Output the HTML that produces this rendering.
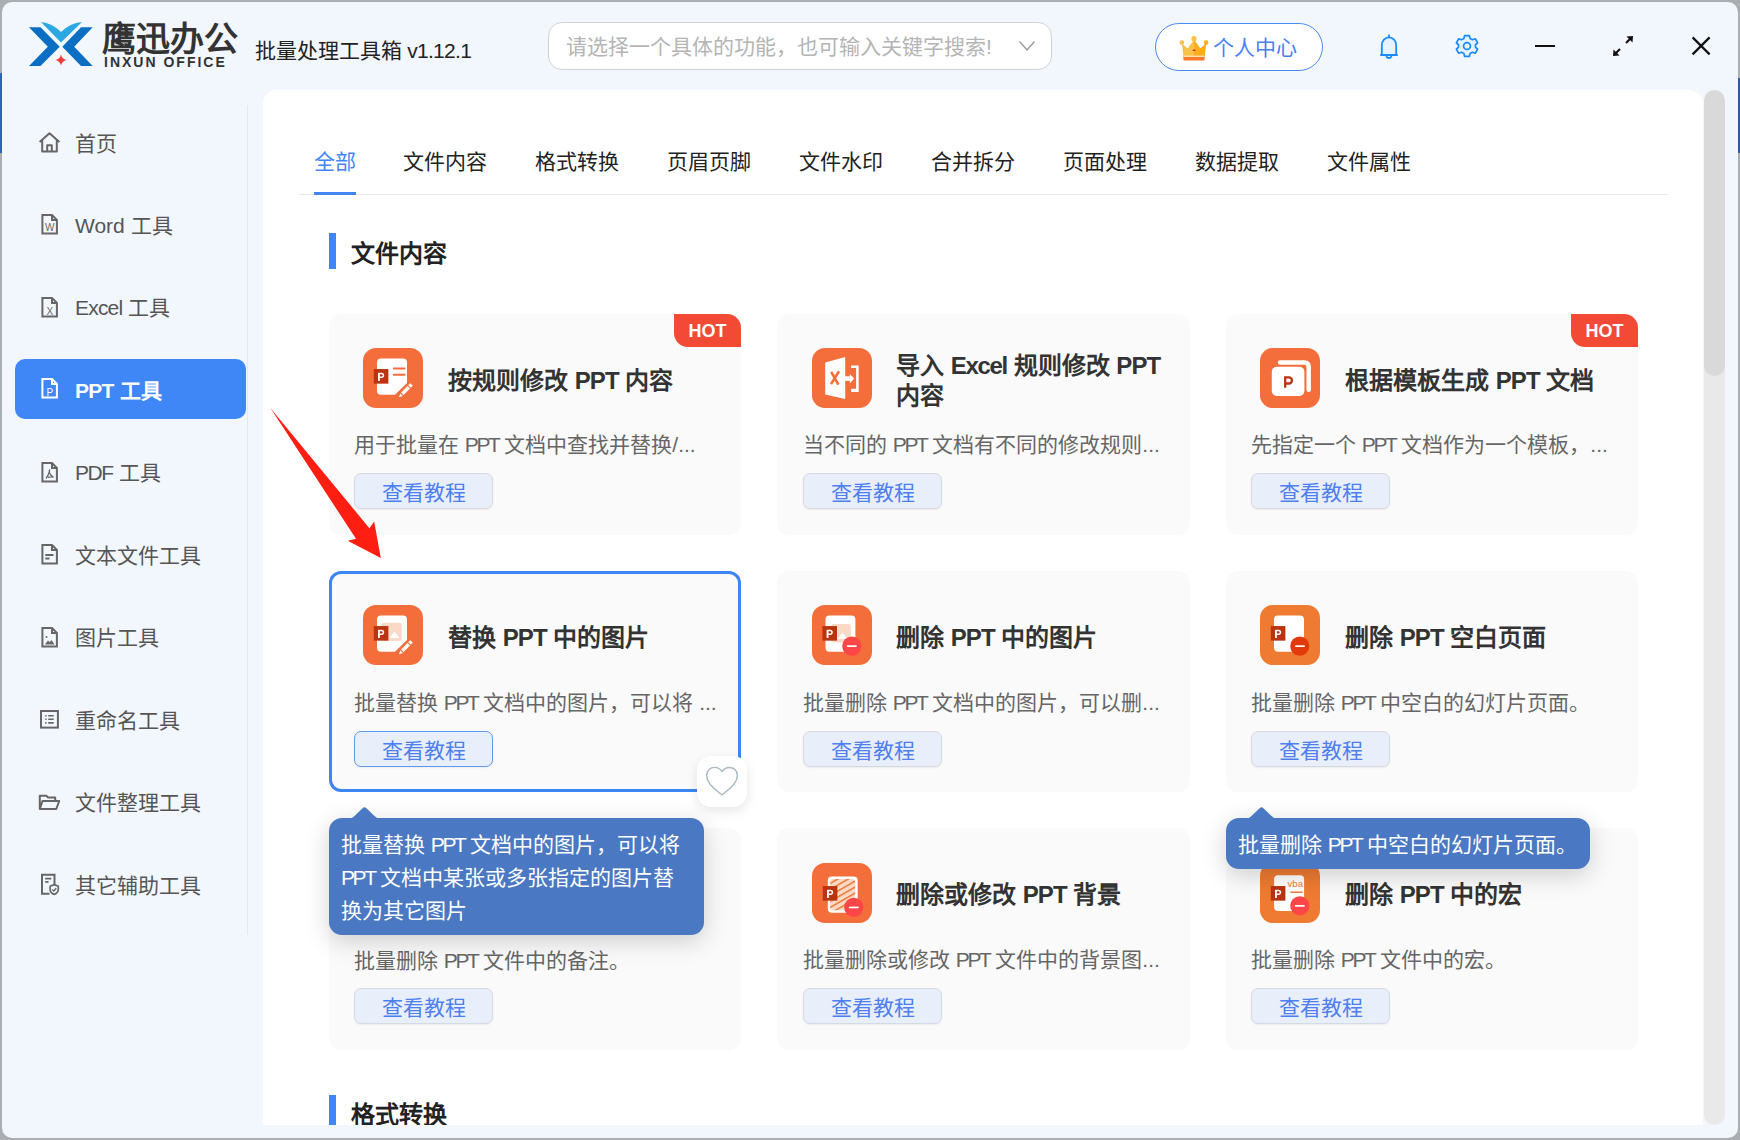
<!DOCTYPE html>
<html lang="zh-CN"><head><meta charset="utf-8">
<style>
*{box-sizing:border-box;margin:0;padding:0}
html,body{width:1740px;height:1140px;overflow:hidden}
body{position:relative;background:#aaadb2;font-family:"Liberation Sans",sans-serif;color:#222}
.a{position:absolute}
.t{position:absolute;white-space:nowrap;line-height:1}
#win{position:absolute;left:2px;top:2px;width:1736px;height:1136px;border-radius:10px;background:#f2f6fd}
.side{position:absolute;left:75px;font-size:21px;color:#555;line-height:1}
.sico{position:absolute;left:39px}
#panel{position:absolute;left:263px;top:90px;width:1440px;height:1035px;background:#fff;border-radius:14px 14px 0 0;overflow:hidden}
.tab{position:absolute;top:151.3px;font-size:21px;line-height:1;color:#222}
.card{position:absolute;width:412px;height:221px;background:#fafafa;border-radius:12px}
.card .ico{position:absolute;left:34px;top:34px;width:60px;height:60px}
.card .tt{position:absolute;left:119px;top:55px;font-size:24px;font-weight:bold;color:#333;line-height:1;white-space:nowrap}
.card .ds{position:absolute;left:25px;top:120px;font-size:21px;color:#666;line-height:1;white-space:nowrap}
.card .bt{position:absolute;left:25px;top:159px;width:139px;height:36px;border:1px solid #d6dae3;background:#e9eefb;border-radius:7px;box-shadow:0 1px 2px rgba(0,0,0,.06)}
.card .bt span{position:absolute;left:27px;top:8px;font-size:21px;line-height:1;color:#4d7ff2;white-space:nowrap}
.l{letter-spacing:-2.4px}.lb{letter-spacing:-0.85px}
.hot{position:absolute;right:0;top:0;width:67px;height:33px;background:#f34a36;border-radius:0 14px 0 14px;color:#fff;font-weight:bold;font-size:18px;line-height:35px;text-align:center}
</style></head><body>
<div class="a" style="left:0;top:73px;width:2px;height:80px;background:#2f62b8"></div><div class="a" style="left:1738px;top:78px;width:2px;height:75px;background:#2f5a9c"></div>
<div id="win"></div>
<svg width="0" height="0" style="position:absolute">
<defs>
 <g id="pbox"><rect x="10.8" y="21.05" width="14.6" height="14.6" fill="#b9340f"/><rect x="15" y="24.8" width="1.9" height="8.1" fill="#fff"/><path d="M16.5,25.55 H18.57 A1.875,1.875 0 0 1 18.57,29.3 H16.5" fill="none" stroke="#fff" stroke-width="1.5"/></g>
 <g id="pbox2"><use href="#pbox" y="2"/></g>
 <g id="minus"><rect x="34.9" y="40.3" width="9.8" height="1.7" fill="#fff"/></g>
 <g id="i1">
  <rect width="60" height="60" rx="13" fill="#f36e3b"/>
  <path d="M18,10.5 H40 Q44,10.5 44,14.5 V35 L32,46.7 H18 Q14,46.7 14,42.7 V14.5 Q14,10.5 18,10.5Z" fill="#fff"/>
  <path d="M30.8,20.5 H41.6 M30.8,26.8 H41.6" stroke="#f36e3b" stroke-width="2" stroke-linecap="round"/>
  <use href="#pbox"/>
  <path d="M39.35,45.85 L45.75,39.35" stroke="#fff" stroke-width="3.5"/>
  <path d="M46.5,38.6 L48.6,36.5" stroke="#fff" stroke-width="3.5"/>
  <polygon points="37.4,45.4 39.9,47.9 35.9,49.3" fill="#fff"/>
 </g>
 <g id="i4">
  <rect width="60" height="60" rx="13" fill="#f36e3b"/>
  <path d="M18,10.5 H40 Q44,10.5 44,14.5 V35 L32,46.7 H18 Q14,46.7 14,42.7 V14.5 Q14,10.5 18,10.5Z" fill="#fff"/>
  <rect x="18.4" y="17.8" width="20.4" height="18.1" rx="2" fill="#fad9c6"/>
  <polygon points="26.5,33 31.5,26.3 36.4,33" fill="#fff"/>
  <use href="#pbox"/>
  <path d="M39.35,45.85 L45.75,39.35" stroke="#fff" stroke-width="3.5"/>
  <path d="M46.5,38.6 L48.6,36.5" stroke="#fff" stroke-width="3.5"/>
  <polygon points="37.4,45.4 39.9,47.9 35.9,49.3" fill="#fff"/>
 </g>
 <g id="i2">
  <rect width="60" height="60" rx="13" fill="#f36e3b"/>
  <polygon points="13.2,14.5 33.2,8.9 33.2,51 13.2,46.4" fill="#fff"/>
  <path d="M19.2,23.8 L26.4,36.6 M27,23.2 L19,36.1" stroke="#f36e3b" stroke-width="2.6"/>
  <rect x="33" y="28.3" width="4.9" height="4.6" fill="#fff"/>
  <polygon points="37.8,26 42.1,30.6 37.8,35.4" fill="#fff"/>
  <path d="M39.1,17.4 H46.7 V44.1 H39.1 V40.8 H44.1 V20.1 H39.1Z" fill="#fff"/>
 </g>
 <g id="i3">
  <rect width="60" height="60" rx="13" fill="#f36e3b"/>
  <path d="M20,14.5 H44.2 Q48.7,14.5 48.7,19 V41.8" fill="none" stroke="#fff" stroke-width="4.5" stroke-linecap="round"/>
  <rect x="11.8" y="18.8" width="32.6" height="29.2" rx="5" fill="#fff"/>
  <path d="M25.2,39.8 V29.4 H28.9 A3.05,3.05 0 0 1 28.9,35.5 H25.2" fill="none" stroke="#b9340f" stroke-width="2.3"/>
 </g>
 <g id="i5">
  <rect width="60" height="60" rx="13" fill="#f36e3b"/>
  <rect x="13.5" y="10.5" width="29.9" height="36.2" rx="4" fill="#fff"/>
  <rect x="19.4" y="19" width="19.4" height="18.5" rx="2" fill="#fad9c6"/>
  <polygon points="25.5,34 30.5,27.5 35.5,34" fill="#fff"/>
  <use href="#pbox" x="-0.4"/>
  <circle cx="39.8" cy="41.1" r="9.6" fill="#ff4646"/>
  <rect x="34.9" y="40.3" width="9.8" height="1.7" fill="#fff"/>
 </g>
 <g id="i6">
  <rect width="60" height="60" rx="13" fill="#ee7b31"/>
  <rect x="14" y="10.5" width="30" height="36.2" rx="4" fill="#fff"/>
  <use href="#pbox"/>
  <circle cx="39.8" cy="41.1" r="9.6" fill="#e23a0b"/>
  <rect x="35.2" y="40.3" width="9.6" height="1.7" fill="#fff"/>
 </g>
 <pattern id="hatch" patternUnits="userSpaceOnUse" width="5.2" height="5.2" patternTransform="rotate(-30)">
  <rect width="5.2" height="5.2" fill="#fad9c6"/><rect y="0" width="5.2" height="1.5" fill="#f3782f"/>
 </pattern>
 <g id="i8">
  <rect width="60" height="60" rx="13" fill="#f36e3b"/>
  <rect x="15.8" y="13.5" width="29.9" height="36.2" rx="4" fill="#fff"/>
  <rect x="18.2" y="16" width="25" height="31.3" rx="3" fill="url(#hatch)"/>
  <use href="#pbox2"/>
  <circle cx="41.8" cy="44.4" r="9.6" fill="#ff4646"/>
  <rect x="36.9" y="43.6" width="9.8" height="1.7" fill="#fff"/>
 </g>
 <g id="i9">
  <rect width="60" height="60" rx="13" fill="#ee7b31"/>
  <rect x="14.1" y="12.2" width="30" height="35.8" rx="4" fill="#fff"/>
  <text x="27.6" y="23.7" font-family="Liberation Sans" font-size="9.2" fill="#ee7b31" textLength="15.4" lengthAdjust="spacingAndGlyphs">vba</text>
  <path d="M31,29.3 H42" stroke="#ee7b31" stroke-width="1.5" stroke-linecap="round"/>
  <use href="#pbox2"/>
  <circle cx="39.8" cy="42.8" r="9.6" fill="#ff4646"/>
  <rect x="34.9" y="42" width="9.8" height="1.7" fill="#fff"/>
 </g>
</defs></svg>


<!-- logo -->
<svg class="a" style="left:0;top:0" width="250" height="80" viewBox="0 0 250 80">
  <polygon fill="#0a6fc2" points="29,27.2 40.5,27.2 59.7,46.7 40.5,65.9 29,65.9 47.8,46.7"/>
  <polygon fill="#0a6fc2" points="92.7,27.2 81,27.2 62.3,46.7 81,65.9 92.7,65.9 74.2,46.7"/>
  <path fill="#2aa8e2" d="M41,22 Q52,23 61,32 Q70,23 82,22 L61,42.5 Z"/>
  <path fill="#f23a3a" d="M61,54.5 Q62,59 66.5,60 Q62,61 61,65.5 Q60,61 55.5,60 Q60,59 61,54.5Z"/>
</svg>
<div class="t" style="left:102px;top:21.5px;font-size:34px;font-weight:600;color:#333">鹰迅办公</div>
<div class="t" style="left:104px;top:55px;font-size:14px;font-weight:bold;color:#333;letter-spacing:2px">INXUN OFFICE</div>
<div class="t" style="left:255px;top:39.5px;font-size:21px;color:#222">批量处理工具箱<span style="letter-spacing:-0.7px"> v1.12.1</span></div>

<!-- search -->
<div class="a" style="left:548px;top:22px;width:504px;height:48px;border:1px solid #d3d3d3;background:#fff;border-radius:14px"></div>
<div class="t" style="left:566px;top:36px;font-size:21px;color:#b5b5b5">请选择一个具体的功能，也可输入关键字搜索!</div>
<svg class="a" style="left:1017px;top:39px" width="20" height="14"><polyline points="2.5,2.5 10,11 17.5,2.5" fill="none" stroke="#9a9a9a" stroke-width="1.4"/></svg>

<!-- user center -->
<div class="a" style="left:1155px;top:23px;width:168px;height:48px;border:1.5px solid #4a8af4;background:#fff;border-radius:24px"></div>
<svg class="a" style="left:1179px;top:35px" width="30" height="28" viewBox="0 0 30 28">
  <path d="M3,8.5 L8.7,13.4 L15,4.8 L21.3,13.4 L27,8.5 L25.6,22 L4.4,22Z" fill="#f8c14a"/>
  <path d="M15,4.8 L21.3,13.4 L27,8.5 L25.6,22 L15,22Z" fill="#ffad18"/>
  <circle cx="2.9" cy="7.6" r="2.3" fill="#f8c14a"/><circle cx="27.1" cy="7.6" r="2.3" fill="#ffad18"/><circle cx="15" cy="3.7" r="2.6" fill="#f8c14a"/>
  <path d="M4.4,21 H25.6 V24.3 Q25.6,25.5 24.4,25.5 H5.6 Q4.4,25.5 4.4,24.3Z" fill="#f57a2e"/>
  <rect x="4.4" y="20.6" width="21.2" height="1.4" fill="#ffe0a6"/>
  <rect x="13.9" y="14.6" width="2.4" height="1.4" fill="#d0202a"/>
</svg>
<div class="t" style="left:1213px;top:37px;font-size:21px;color:#4a7ff5">个人中心</div>

<!-- bell / gear -->
<svg class="a" style="left:1376px;top:32px" width="26" height="28" viewBox="0 0 26 28">
  <path d="M5.8,23 L5.8,13.5 A7.2,8.2 0 0 1 20.2,13.5 L20.2,23 Z" fill="#e6f3ff" stroke="#1a8cff" stroke-width="1.8"/>
  <line x1="4.2" y1="23" x2="21.8" y2="23" stroke="#1a8cff" stroke-width="1.8"/>
  <path d="M10.5,23.5 A2.5,2.5 0 0 0 15.5,23.5" fill="none" stroke="#1a8cff" stroke-width="1.8"/>
  <line x1="13" y1="2.5" x2="13" y2="5" stroke="#1a8cff" stroke-width="1.8"/>
</svg>
<svg class="a" style="left:1453px;top:32px" width="28" height="28" viewBox="-14.7 -14.7 29.4 29.4">
  <path id="gear" fill="#e6f3ff" stroke="#1a8cff" stroke-width="1.8" stroke-linejoin="round" d="M-2.5,-11 L2.5,-11 L3.2,-8 L5.8,-6.6 L8.7,-7.6 L11.2,-3.3 L8.9,-1.3 L8.9,1.3 L11.2,3.3 L8.7,7.6 L5.8,6.6 L3.2,8 L2.5,11 L-2.5,11 L-3.2,8 L-5.8,6.6 L-8.7,7.6 L-11.2,3.3 L-8.9,1.3 L-8.9,-1.3 L-11.2,-3.3 L-8.7,-7.6 L-5.8,-6.6 L-3.2,-8 Z"/>
  <circle cx="0" cy="0" r="3.6" fill="none" stroke="#1a8cff" stroke-width="1.8"/>
</svg>

<!-- window controls -->
<div class="a" style="left:1535px;top:45px;width:20px;height:2.2px;background:#111"></div>
<svg class="a" style="left:1610px;top:33px" width="26" height="26" viewBox="0 0 26 26">
  <line x1="5" y1="21" x2="10" y2="16" stroke="#111" stroke-width="2.2"/>
  <line x1="16" y1="10" x2="21" y2="5" stroke="#111" stroke-width="2.2"/>
  <polygon points="3,23 3.5,16.5 9.5,22.5" fill="#111"/>
  <polygon points="23,3 22.5,9.5 16.5,3.5" fill="#111"/>
</svg>
<svg class="a" style="left:1689px;top:34px" width="24" height="24" viewBox="0 0 24 24">
  <line x1="3.6" y1="3.4" x2="20.6" y2="20.4" stroke="#111" stroke-width="2.2"/>
  <line x1="20.6" y1="3.4" x2="3.6" y2="20.4" stroke="#111" stroke-width="2.2"/>
</svg>

<!-- SIDEBAR -->
<div class="a" style="left:247px;top:105px;width:1px;height:830px;background:#e6e8ee"></div>
<div class="a" style="left:15px;top:359px;width:231px;height:60px;background:#3f86f7;border-radius:10px"></div>

<svg class="a" style="left:37px;top:130px" width="26" height="26" viewBox="0 0 26 26"><path d="M2.6,12 L12.5,3.2 L22.4,12 M5.2,10 V21.6 H19.8 V10 M10.2,21.6 V15.3 H14.8 V21.6" fill="none" stroke="#666" stroke-width="2" stroke-linejoin="round"/></svg><svg class="a" style="left:38px;top:212px" width="24" height="26" viewBox="0 0 24 26"><path d="M4.4,3 H14 L18.9,7.9 V21.6 H4.4 Z M14,3 V7.9 H18.9" fill="none" stroke="#666" stroke-width="2" stroke-linejoin="miter"/><text x="11.8" y="19.2" font-family="Liberation Sans" font-size="10" fill="#666" text-anchor="middle">W</text></svg><svg class="a" style="left:38px;top:295px" width="24" height="26" viewBox="0 0 24 26"><path d="M4.4,3 H14 L18.9,7.9 V21.6 H4.4 Z M14,3 V7.9 H18.9" fill="none" stroke="#666" stroke-width="2" stroke-linejoin="miter"/><text x="11.8" y="19.6" font-family="Liberation Sans" font-size="10" fill="#666" text-anchor="middle">X</text></svg><svg class="a" style="left:38px;top:376px" width="24" height="26" viewBox="0 0 24 26"><path d="M4.4,3 H14 L18.9,7.9 V21.6 H4.4 Z M14,3 V7.9 H18.9" fill="none" stroke="#fff" stroke-width="2" stroke-linejoin="miter"/><text x="11.8" y="19.8" font-family="Liberation Sans" font-size="10" fill="#fff" text-anchor="middle">P</text></svg><svg class="a" style="left:38px;top:460px" width="24" height="26" viewBox="0 0 24 26"><path d="M4.4,3 H14 L18.9,7.9 V21.6 H4.4 Z M14,3 V7.9 H18.9" fill="none" stroke="#666" stroke-width="2" stroke-linejoin="miter"/><path d="M8,18.5 Q10,16 11.3,12 Q12,10 11.5,9.8 Q10.8,10.2 11.6,13 Q12.6,15.8 15.5,17 Q13,16.5 10,17.3" fill="none" stroke="#666" stroke-width="1.3"/></svg><svg class="a" style="left:38px;top:542px" width="24" height="26" viewBox="0 0 24 26"><path d="M4.4,3 H14 L18.9,7.9 V21.6 H4.4 Z M14,3 V7.9 H18.9" fill="none" stroke="#666" stroke-width="2" stroke-linejoin="miter"/><path d="M7.3,13 H15.5 M7.3,16.5 H11.5" stroke="#666" stroke-width="1.8"/></svg><svg class="a" style="left:38px;top:625px" width="24" height="26" viewBox="0 0 24 26"><path d="M4.4,3 H14 L18.9,7.9 V21.6 H4.4 Z M14,3 V7.9 H18.9" fill="none" stroke="#666" stroke-width="2" stroke-linejoin="miter"/><circle cx="8.5" cy="12" r="1" fill="#666"/><path d="M6.8,19.5 L10,15.5 L11.8,17.3 L13.5,15 L16.5,19.5Z" fill="#666"/></svg><svg class="a" style="left:37px;top:707px" width="26" height="26" viewBox="0 0 26 26"><rect x="4" y="4" width="16.9" height="16.6" fill="none" stroke="#666" stroke-width="2"/><path d="M8.2,8.7 h1.4 M8.2,12.3 h1.4 M8.2,15.9 h1.4 M11.2,8.7 h5.5 M11.2,12.3 h5.5 M11.2,15.9 h5.5" stroke="#666" stroke-width="1.6"/></svg><svg class="a" style="left:36px;top:790px" width="26" height="24" viewBox="0 0 26 24"><path d="M3.8,19 V5.7 H10.3 L12.2,7.6 H19.2 V11 M3.8,19 L6.5,11 H23.2 L20.3,19 Z" fill="none" stroke="#666" stroke-width="2" stroke-linejoin="round"/></svg><svg class="a" style="left:38px;top:871px" width="24" height="26" viewBox="0 0 24 26"><path d="M16.5,13.5 V3.7 H4 V22.7 H11.5" fill="none" stroke="#666" stroke-width="2"/><path d="M7.2,7.7 H13.3 M7.2,10.8 H10.5" stroke="#666" stroke-width="1.7"/><path d="M16.2,13.6 L20.3,15.2 V18.5 Q20.3,21.8 16.2,23.4 Q12.1,21.8 12.1,18.5 V15.2 Z" fill="#f2f6fd" stroke="#666" stroke-width="1.7" stroke-linejoin="round"/><path d="M14.3,18.6 L15.8,20 L18.2,17.3" fill="none" stroke="#666" stroke-width="1.4"/></svg>
<div class="side" style="top:133px">首页</div>
<div class="side" style="top:215px">Word 工具</div>
<div class="side" style="top:297px"><span style="letter-spacing:-0.8px">Excel</span> 工具</div>
<div class="side" style="top:380px;color:#fff;font-weight:bold"><span style="letter-spacing:-0.7px">PPT</span> 工具</div>
<div class="side" style="top:462px"><span style="letter-spacing:-1.4px">PDF</span> 工具</div>
<div class="side" style="top:545px">文本文件工具</div>
<div class="side" style="top:627px">图片工具</div>
<div class="side" style="top:710px">重命名工具</div>
<div class="side" style="top:792px">文件整理工具</div>
<div class="side" style="top:875px">其它辅助工具</div>


<!-- PANEL -->
<div id="panel"></div>
<div class="tab" style="left:314px;color:#4285f4">全部</div>
<div class="tab" style="left:403px">文件内容</div>
<div class="tab" style="left:535px">格式转换</div>
<div class="tab" style="left:667px">页眉页脚</div>
<div class="tab" style="left:799px">文件水印</div>
<div class="tab" style="left:931px">合并拆分</div>
<div class="tab" style="left:1063px">页面处理</div>
<div class="tab" style="left:1195px">数据提取</div>
<div class="tab" style="left:1327px">文件属性</div>
<div class="a" style="left:299px;top:194px;width:1369px;height:1px;background:#e8e8e8"></div>
<div class="a" style="left:314px;top:192px;width:42px;height:3px;background:#4285f4"></div>

<div class="a" style="left:329px;top:233px;width:7px;height:36px;background:#4285f4"></div>
<div class="t" style="left:351px;top:241.5px;font-size:24px;font-weight:bold;color:#222">文件内容</div>

<div class="card" style="left:329px;top:314px">
  <svg class="ico" viewBox="0 0 60 60"><use href="#i1"/></svg>
  <div class="tt">按规则修改 <span class="lb">PPT</span> 内容</div>
  <div class="ds">用于批量在 <span class="l">PPT</span> 文档中查找并替换/...</div>
  <div class="bt"><span>查看教程</span></div>
  <div class="hot">HOT</div>
</div>
<div class="card" style="left:777px;top:314px;width:413px">
  <svg class="ico" viewBox="0 0 60 60" style="left:35px"><use href="#i2"/></svg>
  <div class="tt" style="top:37px;line-height:29.5px">导入 <span class="lb" style="letter-spacing:-1.3px">Excel</span> 规则修改 <span class="lb">PPT</span><br>内容</div>
  <div class="ds" style="left:26px">当不同的 <span class="l">PPT</span> 文档有不同的修改规则...</div>
  <div class="bt" style="left:26px"><span>查看教程</span></div>
</div>
<div class="card" style="left:1226px;top:314px">
  <svg class="ico" viewBox="0 0 60 60"><use href="#i3"/></svg>
  <div class="tt">根据模板生成 <span class="lb">PPT</span> 文档</div>
  <div class="ds">先指定一个 <span class="l">PPT</span> 文档作为一个模板，...</div>
  <div class="bt"><span>查看教程</span></div>
  <div class="hot">HOT</div>
</div>

<div class="card" style="left:329px;top:571px;box-shadow:inset 0 0 0 3px #3d86f5">
  <svg class="ico" viewBox="0 0 60 60"><use href="#i4"/></svg>
  <div class="tt">替换 <span class="lb">PPT</span> 中的图片</div>
  <div class="ds" style="top:121px">批量替换 <span class="l">PPT</span> 文档中的图片，可以将 ...</div>
  <div class="bt" style="border-color:#5d9af5;top:160px"><span>查看教程</span></div>
</div>
<div class="card" style="left:777px;top:571px;width:413px">
  <svg class="ico" viewBox="0 0 60 60" style="left:35px"><use href="#i5"/></svg>
  <div class="tt">删除 <span class="lb">PPT</span> 中的图片</div>
  <div class="ds" style="left:26px;top:121px">批量删除 <span class="l">PPT</span> 文档中的图片，可以删...</div>
  <div class="bt" style="left:26px;top:160px"><span>查看教程</span></div>
</div>
<div class="card" style="left:1226px;top:571px">
  <svg class="ico" viewBox="0 0 60 60"><use href="#i6"/></svg>
  <div class="tt">删除 <span class="lb">PPT</span> 空白页面</div>
  <div class="ds" style="top:121px">批量删除 <span class="l">PPT</span> 中空白的幻灯片页面。</div>
  <div class="bt" style="top:160px"><span>查看教程</span></div>
</div>

<div class="card" style="left:329px;top:828px;height:222px">
  <div class="tt">删除 <span class="lb">PPT</span> 中的备注</div>
  <div class="ds" style="top:122px">批量删除 <span class="l">PPT</span> 文件中的备注。</div>
  <div class="bt" style="top:160px"><span>查看教程</span></div>
</div>
<div class="card" style="left:777px;top:828px;width:413px;height:222px">
  <svg class="ico" viewBox="0 0 60 60" style="left:35px;top:35px"><use href="#i8"/></svg>
  <div class="tt" style="top:55px">删除或修改 <span class="lb">PPT</span> 背景</div>
  <div class="ds" style="left:26px;top:121px">批量删除或修改 <span class="l">PPT</span> 文件中的背景图...</div>
  <div class="bt" style="left:26px;top:160px"><span>查看教程</span></div>
</div>
<div class="card" style="left:1226px;top:828px;height:222px">
  <svg class="ico" viewBox="0 0 60 60" style="top:35px"><use href="#i9"/></svg>
  <div class="tt" style="top:55px">删除 <span class="lb">PPT</span> 中的宏</div>
  <div class="ds" style="top:121px">批量删除 <span class="l">PPT</span> 文件中的宏。</div>
  <div class="bt" style="top:160px"><span>查看教程</span></div>
</div>

<div class="a" style="left:329px;top:1095px;width:7px;height:36px;background:#4285f4"></div>
<div class="t" style="left:351px;top:1103px;font-size:24px;font-weight:bold;color:#222">格式转换</div>
<div class="a" style="left:263px;top:1125px;width:1441px;height:13px;background:#f2f6fd"></div>

<!-- heart -->
<div class="a" style="left:697px;top:756px;width:50px;height:51px;background:#fff;border-radius:14px;box-shadow:0 4px 12px rgba(0,0,0,.10)"></div>
<svg class="a" style="left:703px;top:763px" width="38" height="36" viewBox="0 0 38 36">
  <path d="M19,31.8 C16,29.5 3.6,22 3.6,12.6 C3.6,7.3 7.5,4.4 11.8,4.4 C15,4.4 17.5,6.2 19,8.6 C20.5,6.2 23,4.4 26.2,4.4 C30.5,4.4 34.4,7.3 34.4,12.6 C34.4,22 22,29.5 19,31.8Z" fill="none" stroke="#aab9c2" stroke-width="1.45" stroke-linejoin="round"/>
</svg>

<!-- tooltips -->
<div class="a" style="left:329px;top:818px;width:375px;height:117px;background:#4a78c2;border-radius:13px;box-shadow:0 6px 24px rgba(0,0,0,.18)"></div>
<svg class="a" style="left:345px;top:804px" width="40" height="16" viewBox="0 0 40 16"><path d="M4,14.6 Q7,14.6 9.5,12.1 L17.6,4.2 Q19.5,2.4 21.4,4.2 L29.5,12.1 Q32,14.6 35,14.6 Z" fill="#4a78c2"/></svg>
<div class="a" style="left:341px;top:828px;width:360px;font-size:21px;line-height:33px;color:#fff">批量替换 <span class="l">PPT</span> 文档中的图片，可以将<br><span class="l">PPT</span> 文档中某张或多张指定的图片替<br>换为其它图片</div>

<div class="a" style="left:1226px;top:818px;width:364px;height:51px;background:#4a78c2;border-radius:13px;box-shadow:0 6px 24px rgba(0,0,0,.18)"></div>
<svg class="a" style="left:1242px;top:804px" width="40" height="16" viewBox="0 0 40 16"><path d="M4,14.6 Q7,14.6 9.5,12.1 L17.6,4.2 Q19.5,2.4 21.4,4.2 L29.5,12.1 Q32,14.6 35,14.6 Z" fill="#4a78c2"/></svg>
<div class="t" style="left:1238px;top:834px;font-size:21px;color:#fff">批量删除 <span class="l">PPT</span> 中空白的幻灯片页面。</div>

<!-- red arrow -->
<svg class="a" style="left:0;top:0" width="400" height="600"><polygon points="270.4,408.1 369.4,528.2 374.2,521.4 380.8,557.9 347.7,540.8 356,538.8" fill="#ff1e12"/></svg>

<!-- scrollbar -->
<div class="a" style="left:1704px;top:360px;width:21px;height:765px;background:#e9e9e9;border-radius:0 0 10.5px 10.5px"></div>
<div class="a" style="left:1704px;top:90px;width:21px;height:286px;background:#d9d9d9;border-radius:10.5px"></div>

</body></html>
